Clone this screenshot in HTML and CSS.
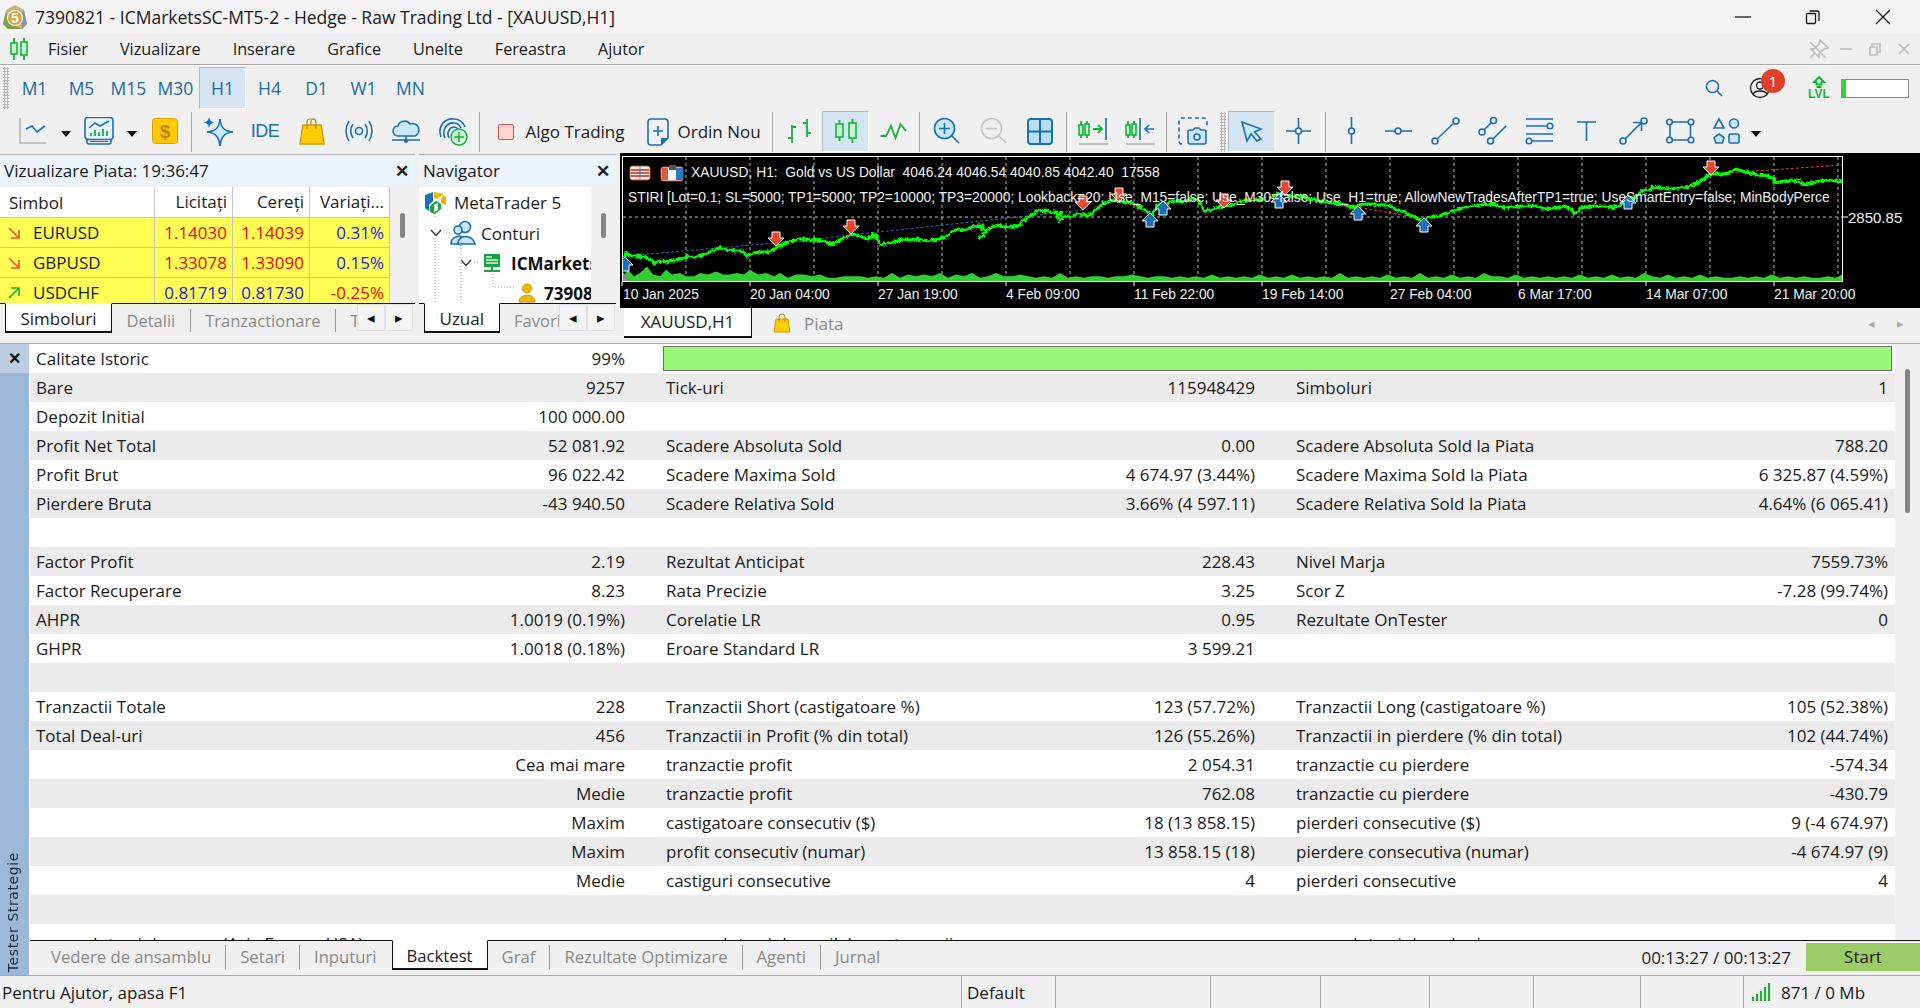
FILE: index.html
```html
<!DOCTYPE html>
<html lang="ro">

<head>
    <meta charset="UTF-8">
    <title>7390821 - ICMarketsSC-MT5-2</title>
    <link rel="stylesheet" href="styles.css">
</head>

<body>
    <!-- bara de titlu -->
    <div class="titlebar">
        <svg class="logo" width="26" height="26" viewBox="0 0 26 26">
            <path d="M13 1 L22 6 L25 20 L20 25 H6 L1 20 L4 6Z" fill="#c9b27a"/>
            <path d="M1 20 L4 8 L9 20 L20 25 H6Z" fill="#7fa04f"/>
            <path d="M22 6 L25 20 L20 25 L18 10Z" fill="#8a94a4"/>
            <circle cx="13" cy="14" r="8" fill="#fff"/>
            <circle cx="13" cy="14" r="7" fill="#d9a63a"/>
            <text x="13" y="19" class="logo-5">5</text>
        </svg>
        <span class="title-text">7390821 - ICMarketsSC-MT5-2 - Hedge - Raw Trading Ltd - [XAUUSD,H1]</span>
        <div class="winbtns">
            <svg width="16" height="16" viewBox="0 0 16 16"><path d="M0 8H16" class="blk"/></svg>
            <svg width="16" height="16" viewBox="0 0 16 16"><path d="M1.500 5.500a1 1 0 0 1 1-1h7a1 1 0 0 1 1 1v8a1 1 0 0 1-1 1h-7a1 1 0 0 1-1-1zM4.500 2h7.500a2 2 0 0 1 2 2v8" class="blk"/></svg>
            <svg width="16" height="16" viewBox="0 0 16 16"><path d="M1 1L15 15M15 1L1 15" class="blk"/></svg>
        </div>
    </div>

    <!-- meniu -->
    <div class="menubar">
        <svg class="menu-icon" width="20" height="22" viewBox="0 0 20 22">
            <path d="M5 0V22M15 0V22" class="gr"/>
            <rect x="2" y="5" width="6" height="11" class="gr-box"/>
            <rect x="12" y="4" width="6" height="13" class="gr-box"/>
        </svg>
        <div class="menu">
            <span>Fisier</span><span>Vizualizare</span><span>Inserare</span><span>Grafice</span><span>Unelte</span><span>Fereastra</span><span>Ajutor</span>
        </div>
        <div class="mdi">
            <svg class="mdi-pin" width="20" height="20" viewBox="0 0 20 20"><path d="M11 1L19 9L15 10L10 15L10 18L2 10L5 10L10 5ZM6 14L1 19M1 3L17 19" class="mdi-ic"/></svg>
            <svg width="12" height="12" viewBox="0 0 12 12"><path d="M0 6H12" class="mdi-ic"/></svg>
            <svg width="12" height="14" viewBox="0 0 12 14"><path d="M1 5h7v8H1zM3 5V2h8v8H8" class="mdi-ic"/></svg>
            <svg width="12" height="12" viewBox="0 0 12 12"><path d="M1 1L11 11M11 1L1 11" class="mdi-ic"/></svg>
        </div>
    </div>

    <!-- perioade -->
    <div class="tfbar">
        <div class="grip"></div>
        <div class="tfs">
            <span>M1</span><span>M5</span><span>M15</span><span>M30</span><span class="on">H1</span><span>H4</span><span>D1</span><span>W1</span><span>MN</span>
        </div>
        <div class="tf-right">
            <svg class="tf-search" width="18" height="18" viewBox="0 0 18 18"><circle cx="7.500" cy="7.500" r="6" class="ln"/><path d="M12 12L17 17" class="ln"/></svg>
            <div class="acct">
                <svg width="22" height="22" viewBox="0 0 22 22"><circle cx="11" cy="11" r="9.500" class="blk"/><circle cx="11" cy="8.500" r="3.500" class="blk"/><path d="M4 17c2-4 12-4 14 0" class="blk"/></svg>
                <span class="badge">1</span>
            </div>
            <div class="lvl">
                <svg width="14" height="12" viewBox="0 0 14 12"><path d="M7 1L12 6H9.500V8.500H4.500V6H2ZM4.500 11H9.500" class="gr"/></svg>
                <span>LVL</span>
            </div>
            <div class="lvlbar"><i></i></div>
        </div>
    </div>

    <!-- bara de unelte -->
    <div class="toolbar">
        <div class="tb">
            <svg class="i" viewBox="0 0 30 30"><path d="M2 1V26H28" class="gy"/><path d="M8 12L14 9L19 15L27 9" class="ln"/></svg>
        </div>
        <div class="drop"><i></i></div>
        <div class="tb">
            <svg class="i" viewBox="0 0 30 30"><rect x="1" y="0.500" width="28" height="22" rx="3" class="ln"/><rect x="3.500" y="3" width="23" height="17" fill="#e4f3fd"/><path d="M5 11L11 6L16 9L25 4" class="ln"/><path d="M7 19V16M11 19V13M15 19V15M19 19V12M23 19V14" class="gr"/><path d="M3 23V25a2 2 0 0 0 2 2H25a2 2 0 0 0 2-2V23" class="ln"/><path d="M6 24.500H24" class="ln-thin"/></svg>
        </div>
        <div class="drop"><i></i></div>
        <div class="tb">
            <svg class="i" viewBox="0 0 30 30"><rect x="2.500" y="1.500" width="25" height="25" rx="3" fill="#ffc800" stroke="#d9a400"/><text x="15" y="21" class="dollar">$</text></svg>
        </div>
        <div class="sep"></div>
        <div class="tb">
            <svg class="i" viewBox="0 0 30 30"><path d="M17 2C18 11 21 14 30 15C21 16 18 20 17 29C16 20 13 16 4 15C13 14 16 11 17 2Z" class="ln-fill"/><path d="M6 0C6.500 3 8 5 11 5.500C8 6 6.500 8 6 11C5.500 8 4 6 1 5.500C4 5 5.500 3 6 0Z" fill="#1a6fb5"/></svg>
        </div>
        <div class="tb"><span class="ide">IDE</span></div>
        <div class="tb">
            <svg class="i" viewBox="0 0 30 30"><path d="M6 8H24L27 27H3Z" fill="#ffcc00" stroke="#cf9e10" stroke-width="1.500"/><path d="M10 12V5a3 3 0 0 1 3-3h3a3 3 0 0 1 3 3v7M14 8V5a3 3 0 0 1 3-3" fill="none" stroke="#b58a10" stroke-width="1.200"/></svg>
        </div>
        <div class="tb">
            <svg class="i" viewBox="0 0 30 30"><circle cx="15" cy="14" r="3.500" class="ln"/><path d="M9 7C6 11 6 17 9 21M21 7C24 11 24 17 21 21M5 4C1 10 1 18 5 24M25 4C29 10 29 18 25 24" class="ln"/></svg>
        </div>
        <div class="tb">
            <svg class="i" viewBox="0 0 30 30"><path d="M7 19a5 5 0 0 1 0-10c1-5 9-7 12-2a6 6 0 0 1 5 12Z" class="ln-fill"/><path d="M1 23H29M15 19V23" class="ln"/><circle cx="15" cy="24" r="2" fill="#1a6fb5"/></svg>
        </div>
        <div class="tb">
            <svg class="i" viewBox="0 0 30 30"><path d="M3 20C-1 8 8 1 16 2C21 2 25 5 27 10M7 21C3 12 10 5 16 6C20 6 22 9 23 11M11 21C8 15 12 10 16 10C18 10 19 11 20 12" class="ln"/><circle cx="21" cy="20" r="8" fill="#d5f7dc" stroke="#12b53a" stroke-width="1.500"/><path d="M21 15V25M16 20H26" stroke="#12b53a" stroke-width="1.500"/></svg>
        </div>
        <div class="sep"></div>
        <div class="algo">
            <span class="algo-box"></span><span class="algo-txt">Algo Trading</span>
        </div>
        <div class="ordin">
            <svg width="22" height="28" viewBox="0 0 22 28"><path d="M4 1H18a3 3 0 0 1 3 3V20L14 27H4a3 3 0 0 1-3-3V4a3 3 0 0 1 3-3Z" class="ln"/><path d="M21 20H14V27Z" fill="#1a6fb5"/><path d="M11 8V18M6 13H16" class="ln"/></svg>
            <span>Ordin Nou</span>
        </div>
        <div class="sep"></div>
        <div class="tb">
            <svg class="i" viewBox="0 0 30 30"><path d="M8 8V26M8 10H12M4 21H8M23 2V20M19 6H23M23 16H27" class="gr"/></svg>
        </div>
        <div class="tb on">
            <svg class="i" viewBox="0 0 30 30"><path d="M8.500 3V24M21.500 2V26" class="gr"/><rect x="5" y="7" width="7" height="13" class="gr-box"/><rect x="18" y="6" width="7" height="15" class="gr-box"/></svg>
        </div>
        <div class="tb">
            <svg class="i" viewBox="0 0 30 30"><path d="M2.500 19L8 19L13 9L17.500 21L22.500 7L28 14" class="gr"/></svg>
        </div>
        <div class="sep"></div>
        <div class="tb">
            <svg class="i" viewBox="0 0 30 30"><circle cx="13.500" cy="11.500" r="10" class="ln-fill"/><path d="M21 19L28 26M13.500 6V17M8 11.500H19" class="ln"/></svg>
        </div>
        <div class="tb">
            <svg class="i" viewBox="0 0 30 30"><circle cx="13.500" cy="11.500" r="10" class="off"/><path d="M21 19L28 26M8 11.500H19" class="off"/></svg>
        </div>
        <div class="tb">
            <svg class="i" viewBox="0 0 30 30"><rect x="3" y="2" width="24" height="25" rx="3" fill="#b8e0fb" stroke="#1a6fb5" stroke-width="2"/><path d="M15 2V27M3 14.500H27" stroke="#1a6fb5" stroke-width="2"/></svg>
        </div>
        <div class="sep"></div>
        <div class="tb">
            <svg class="i" viewBox="0 0 30 30"><path d="M3 4V21M9 4V21" class="gr"/><rect x="1" y="8" width="4" height="10" class="gr-box"/><rect x="7" y="7" width="4" height="11" class="gr-box"/><path d="M15 12H24M20 8L24 12L20 16" class="gr"/><path d="M28 1V23" class="ln"/><path d="M1 27H30" class="gy"/></svg>
        </div>
        <div class="tb">
            <svg class="i" viewBox="0 0 30 30"><path d="M3 4V21M9 4V21" class="gr"/><rect x="1" y="8" width="4" height="10" class="gr-box"/><rect x="7" y="7" width="4" height="11" class="gr-box"/><path d="M15 1V23M20 12H29M24 8L20 12L24 16" class="ln"/><path d="M1 27H30" class="gy"/></svg>
        </div>
        <div class="sep"></div>
        <div class="tb">
            <svg class="i" viewBox="0 0 30 30"><path d="M4 27a3 3 0 0 1-3-3V4a3 3 0 0 1 3-3H26a3 3 0 0 1 3 3V9" class="ln dash"/><path d="M10 15a2 2 0 0 1 2-2H15L17 11H21L23 13H26a2 2 0 0 1 2 2V25a2 2 0 0 1-2 2H12a2 2 0 0 1-2-2Z" class="ln-fill"/><circle cx="19" cy="20" r="3" class="ln"/></svg>
        </div>
        <div class="grip grip-tb"></div>
        <div class="tb on">
            <svg class="i" viewBox="0 0 30 30"><path d="M5 5L24 12L17.500 15L24 22L20 24L14 17L10 24Z" class="ln-fill"/></svg>
        </div>
        <div class="tb">
            <svg class="i" viewBox="0 0 30 30"><circle cx="14.500" cy="14" r="3" class="ln"/><path d="M14.500 1V11M14.500 17V27M2 14H11.500M17.500 14H27" class="ln"/></svg>
        </div>
        <div class="sep"></div>
        <div class="tb">
            <svg class="i" viewBox="0 0 30 30"><circle cx="14.500" cy="14" r="3" class="ln"/><path d="M14.500 0V11M14.500 17V27" class="ln"/></svg>
        </div>
        <div class="tb">
            <svg class="i" viewBox="0 0 30 30"><circle cx="14" cy="14" r="3" class="ln"/><path d="M1 14H11M17 14H28" class="ln"/></svg>
        </div>
        <div class="tb">
            <svg class="i" viewBox="0 0 30 30"><circle cx="4" cy="24" r="3" class="ln"/><circle cx="25" cy="4" r="3" class="ln"/><path d="M6 22L23 6" class="ln"/></svg>
        </div>
        <div class="tb">
            <svg class="i" viewBox="0 0 30 30"><circle cx="4" cy="15" r="3" class="ln"/><circle cx="15.500" cy="3.500" r="3" class="ln"/><circle cx="12.500" cy="24" r="3" class="ln"/><path d="M6 13L13.500 5.500M15 22L28 9" class="ln"/></svg>
        </div>
        <div class="tb">
            <svg class="i" viewBox="0 0 30 30"><circle cx="25" cy="9" r="2.800" class="ln"/><circle cx="4" cy="24" r="2.800" class="ln"/><path d="M1 2H28M1 9H22M1 17H28M7 24H28" class="ln"/></svg>
        </div>
        <div class="tb">
            <svg class="i" viewBox="0 0 30 30"><path d="M5 5H24M14.500 5V24" class="ln"/></svg>
        </div>
        <div class="tb">
            <svg class="i" viewBox="0 0 30 30"><circle cx="4" cy="24" r="3" class="ln"/><circle cx="25" cy="4" r="3" class="ln"/><path d="M6 22L22 6M14 5.500H22.500V14" class="ln"/></svg>
        </div>
        <div class="tb">
            <svg class="i" viewBox="0 0 30 30"><path d="M6 5H22M6 23H22M4 7.500V20.500M24.500 7.500V20.500" class="ln"/><circle cx="3.500" cy="5" r="2.800" class="ln"/><circle cx="25" cy="5" r="2.800" class="ln"/><circle cx="3.500" cy="23" r="2.800" class="ln"/><circle cx="25" cy="23" r="2.800" class="ln"/></svg>
        </div>
        <div class="tb">
            <svg class="i" viewBox="0 0 30 30"><path d="M6 2L11 11H1Z" class="ln"/><circle cx="21" cy="6.500" r="4.500" class="ln-fill"/><path d="M6 17L11 20.500L9.500 26H3L1 20.500Z" class="ln-fill"/><rect x="16" y="17" width="10" height="9" rx="1.500" class="ln-fill"/></svg>
        </div>
        <div class="drop drop-end"><i></i></div>
    </div>

    <!-- panouri -->
    <div class="panes">
        <div class="pane pane-market">
            <div class="pane-head"><span>Vizualizare Piata: 19:36:47</span><b class="x">&#x2715;</b></div>
            <div class="pane-body">
                <div class="mw">
                    <div class="mw-row mw-head"><span>Simbol</span><span>Licitați</span><span>Cereți</span><span>Variați...</span></div>
                    <div class="mw-row mw-y">
                        <span><svg class="ar" viewBox="0 0 12 12"><path d="M1 1L11 11M3 11H11V3" class="ar-r"/></svg>EURUSD</span><span class="red">1.14030</span><span class="red">1.14039</span><span class="blue">0.31%</span>
                    </div>
                    <div class="mw-row mw-y">
                        <span><svg class="ar" viewBox="0 0 12 12"><path d="M1 1L11 11M3 11H11V3" class="ar-r"/></svg>GBPUSD</span><span class="red">1.33078</span><span class="red">1.33090</span><span class="blue">0.15%</span>
                    </div>
                    <div class="mw-row mw-y mw-cut">
                        <span><svg class="ar" viewBox="0 0 12 12"><path d="M1 11L11 1M3 1H11V9" class="ar-g"/></svg>USDCHF</span><span class="blue">0.81719</span><span class="blue">0.81730</span><span class="red">-0.25%</span>
                    </div>
                </div>
                <div class="vscroll"><i></i></div>
            </div>
            <div class="tabs">
                <span class="tab on">Simboluri</span><span class="tab">Detalii</span><span class="tab">Tranzactionare</span><span class="tab tab-cut">T</span>
                <div class="arrows"><span>&#9666;</span><span>&#9656;</span></div>
            </div>
        </div>

        <div class="pane pane-nav">
            <div class="pane-head"><span>Navigator</span><b class="x">&#x2715;</b></div>
            <div class="pane-body">
                <div class="tree">
                    <div class="node n0">
                        <svg width="23" height="24" viewBox="0 0 23 24"><path d="M1 4L9 1V10L5 14V20L1 17Z" fill="#1a6fb5"/><path d="M10 1L20 3L13 8L10 7Z" fill="#f2b700"/><path d="M20 4L22 6V14L17 12V8Z" fill="#f2b700"/><path d="M6 15L12 10L17 13V18L11 23L6 21Z" fill="#18a63c"/><path d="M10 14L14 12V19L10 21Z" fill="#fff"/></svg>
                        <span>MetaTrader 5</span>
                    </div>
                    <div class="node n1">
                        <svg class="chev" viewBox="0 0 12 8"><path d="M1 1L6 6.500L11 1" class="chev-p"/></svg>
                        <svg class="nic" width="26" height="26" viewBox="0 0 26 26"><circle cx="15" cy="7" r="5.500" class="ln-fill"/><path d="M7 24C7 14 23 14 25 24Z" class="ln-fill"/><circle cx="8" cy="10" r="4" class="ln-fill"/><path d="M1 24C1 17 9 15 12 17C9 19 8 21 8 24Z" class="ln-fill"/></svg>
                        <span>Conturi</span>
                    </div>
                    <div class="node n2">
                        <svg class="chev" viewBox="0 0 12 8"><path d="M1 1L6 6.500L11 1" class="chev-p"/></svg>
                        <svg class="nic" width="20" height="20" viewBox="0 0 20 20"><rect x="2" y="1" width="16" height="13" fill="#17a53b"/><path d="M4 4H10M4 7H16M4 10H16" stroke="#dff5e3" stroke-width="1.500"/><path d="M10 14V17M2 18H18" stroke="#17a53b" stroke-width="2"/></svg>
                        <b>ICMarketsSC-MT5-2</b>
                    </div>
                    <div class="node n3">
                        <svg class="nic" width="18" height="20" viewBox="0 0 18 20"><circle cx="9" cy="5.500" r="4.500" fill="#f2b700" stroke="#c99700"/><path d="M1 19C1 10 17 10 17 19Z" fill="#f2b700" stroke="#c99700"/></svg>
                        <b>7390821</b>
                    </div>
                    <svg class="tree-dots" width="172" height="117" viewBox="0 0 172 117">
                        <path d="M16 26V30M16 42V116M42 55V60M42 58V116M74 84V100H96" class="dots"/>
                        <path d="M27 46H33M55 75H61" class="dots"/>
                    </svg>
                </div>
                <div class="vscroll"><i></i></div>
            </div>
            <div class="tabs">
                <span class="tab on">Uzual</span><span class="tab tab-cut">Favori</span>
                <div class="arrows arrows-nav"><span>&#9666;</span><span>&#9656;</span></div>
            </div>
        </div>

        <div class="pane-chart">
            <div class="chart">
                <svg width="1300" height="155" viewBox="0 -1 1300 155">
                    <defs>
                        <clipPath id="plot"><rect x="3" y="3" width="1219" height="124"/></clipPath>
                        <path id="dn" d="M-4-7H4V-1H8L0 7L-8-1H-4Z"/>
                        <path id="up" d="M-4 7H4V1H8L0-7L-8 1H-4Z"/>
                        <filter id="rough" x="-2%" y="-20%" width="104%" height="140%" color-interpolation-filters="sRGB">
                            <feTurbulence type="fractalNoise" baseFrequency="0.3" numOctaves="2" seed="4" result="n"/>
                            <feDisplacementMap in="SourceGraphic" in2="n" scale="5" xChannelSelector="R" yChannelSelector="G"/>
                        </filter>
                    </defs>
                    <!-- grila -->
                    <path class="grid" d="M66 3V127M130 3V127M194 3V127M258 3V127M322 3V127M386 3V127M450 3V127M514 3V127M578 3V127M642 3V127M706 3V127M770 3V127M834 3V127M898 3V127M962 3V127M1026 3V127M1090 3V127M1154 3V127M1218 3V127M3 63H1222"/>
                    <!-- volum -->
                    <path class="vol" transform="translate(0 127) scale(1 1.600) translate(0 -127)" d="M3 127V124L8 120L14 124L20 122L27 118L33 123L40 124L46 120L52 123L60 122L66 124L74 124L80 122L88 123L96 121L103 123L110 123L117 122L124 123L130 120L138 123L146 122L154 124L160 122L168 125L176 123L184 123L192 124L200 123L208 125L216 125L224 124L232 124L240 124L248 125L256 124L264 125L272 122L280 125L288 123L296 124L304 123L312 124L320 122L328 125L336 123L344 124L352 122L360 125L368 124L376 122L384 124L392 124L400 123L408 124L416 125L424 124L432 125L440 122L448 125L456 124L464 125L472 124L480 124L488 125L496 124L504 124L512 123L520 124L528 125L536 124L544 124L552 125L560 124L568 125L576 124L584 125L592 123L600 125L608 124L616 125L624 124L632 125L640 123L648 125L656 124L664 125L672 123L680 125L688 124L696 125L704 124L712 125L720 122L728 125L736 124L744 125L752 124L760 125L768 123L776 125L784 124L792 125L800 122L808 125L816 124L824 125L832 123L840 125L848 124L856 125L864 122L872 124L880 124L888 125L896 123L904 125L912 124L920 125L928 124L936 125L944 124L952 125L960 123L968 125L976 124L984 125L992 123L1000 125L1008 124L1016 125L1024 122L1032 124L1040 125L1048 123L1056 125L1064 124L1072 125L1080 123L1088 125L1096 124L1104 125L1112 125L1120 124L1128 125L1136 124L1144 125L1152 123L1160 125L1168 124L1176 125L1184 124L1192 125L1200 125L1208 124L1216 125L1222 123V127Z"/>
                    <path class="vol-gy" d="M3 127V118L9 127Z"/>
                    <g clip-path="url(#plot)">
                        <!-- linii tranzactii -->
                        <path class="tr-blue" d="M6 102L156 89M156 90L231 81M231 81L463 56"/>
                        <path class="tr-red" d="M499 46L530 58M604 48L665 41M665 43L738 53L804 65M1091 20L1222 11"/>
                        <!-- pret -->
                        <g filter="url(#rough)">
                            <polyline class="price" points="4,104 6,100 10,101 14,102 18,102 22,103 26,103 30,106 34,109 38,108 42,107 46,108 50,107 54,107 58,105 62,105 66,103 70,102 74,104 78,102 84,100 90,98 96,95 100,94 104,95 110,96 116,97 122,97 127,102 130,101 134,99 140,98 146,98 150,98 154,95 158,92 162,92 166,88 172,87 178,85 184,85 190,86 196,86 202,87 208,89 212,90 218,87 224,84 231,80 236,81 242,83 248,85 250,83 252,83 254,80 258,85 260,91 264,90 268,89 274,88 280,86 284,85 290,86 296,85 302,86 308,87 314,86 320,85 326,82 332,78 338,75 344,76 350,74 354,72 358,73 364,71 360,71 362,74 366,78 360,84 359,85 362,81 368,76 372,73 378,71 384,73 390,72 396,73 400,70 404,66 410,62 414,60 418,56 424,57 430,58 436,58 442,60 436,60 440,67 444,62 450,63 456,60 462,60 466,62 472,60 476,55 482,51 488,48 494,46 500,47 506,49 512,49 520,53 530,60 532,63 534,58 538,50 544,50 550,48 556,47 562,48 568,47 572,45 578,45 582,53 585,57 590,56 596,54 604,52 612,51 620,47 628,47 636,46 644,45"/>
                            <polyline class="price" points="650,44 658,40 664,40 672,42 680,42 690,45 700,47 712,49 722,50 735,54 738,51 742,50 750,50 758,51 768,51 776,55 784,58 790,61 797,64 804,69 808,63 816,63 822,61 830,58 840,55 846,53 860,51 872,50 885,54 892,53 900,52 915,52 925,55 934,54 945,52 952,56 954,60 958,58 960,54 972,52 984,52 994,54 1000,51 1006,49 1012,46 1018,41 1022,37 1030,36 1032,33 1040,34 1050,35 1060,34 1070,32 1080,28 1090,20 1096,20 1105,20 1112,17 1116,15 1122,17 1130,19 1138,21 1148,22 1154,25 1154,29 1160,28 1170,26 1176,27 1180,28 1184,30 1190,29 1200,27 1210,26 1222,28"/>
                        </g>
                        <!-- marcaje -->
                        <use href="#dn" class="m-dn" x="156" y="85"/>
                        <use href="#dn" class="m-dn" x="231" y="73"/>
                        <use href="#dn" class="m-dn" x="463" y="49"/>
                        <use href="#dn" class="m-dn" x="499" y="41"/>
                        <use href="#dn" class="m-dn" x="604" y="47"/>
                        <use href="#dn" class="m-dn" x="665" y="34"/>
                        <use href="#dn" class="m-dn" x="1091" y="14"/>
                        <use href="#up" class="m-up" x="5" y="110"/>
                        <use href="#up" class="m-up" x="530" y="66"/>
                        <use href="#up" class="m-up" x="543" y="54"/>
                        <use href="#up" class="m-up" x="659" y="47"/>
                        <use href="#up" class="m-up" x="738" y="59"/>
                        <use href="#up" class="m-up" x="804" y="71"/>
                        <use href="#up" class="m-up" x="1008" y="48"/>
                        <text x="8" y="48" class="ct">STIRI [Lot=0.1; SL=5000; TP1=5000; TP2=10000; TP3=20000; Lookback=20; Use_M15=false; Use_M30=false; Use_H1=true; AllowNewTradesAfterTP1=true; UseSmartEntry=false; MinBodyPerce</text>
                    </g>
                    <rect class="box" x="2.500" y="2.500" width="1220" height="125"/>
                    <!-- butoane -->
                    <rect x="10" y="12" width="20" height="14" rx="2" fill="#f4f4f4" stroke="#c8402a"/>
                    <path d="M11 16H29M11 19H29M11 22H29" stroke="#d85a40" stroke-width="2"/>
                    <path d="M20 13V25" stroke="#2a7cc0" stroke-width="1"/>
                    <rect x="41" y="13" width="22" height="14" rx="2" fill="#fff" stroke="#c8402a"/>
                    <path d="M42 14H48V26H42Z" fill="#d85a40"/>
                    <path d="M49 11H56V16H49Z" fill="#555"/>
                    <path d="M56 14H63V26H56Z" fill="#2a7cc0"/>
                    <text x="71" y="23" class="ct">XAUUSD, H1:  Gold vs US Dollar  4046.24 4046.54 4040.85 4042.40  17558</text>
                    <!-- axe -->
                    <path class="box" d="M1223 63H1228M130 128V132M258 128V132M386 128V132M514 128V132M642 128V132M770 128V132M898 128V132M1026 128V132M1154 128V132M2 128V132"/>
                    <text x="1228" y="69" class="ct ct-price">2850.85</text>
                    <text x="3" y="145" class="ct">10 Jan 2025</text>
                    <text x="130" y="145" class="ct">20 Jan 04:00</text>
                    <text x="258" y="145" class="ct">27 Jan 19:00</text>
                    <text x="386" y="145" class="ct">4 Feb 09:00</text>
                    <text x="514" y="145" class="ct">11 Feb 22:00</text>
                    <text x="642" y="145" class="ct">19 Feb 14:00</text>
                    <text x="770" y="145" class="ct">27 Feb 04:00</text>
                    <text x="898" y="145" class="ct">6 Mar 17:00</text>
                    <text x="1026" y="145" class="ct">14 Mar 07:00</text>
                    <text x="1154" y="145" class="ct">21 Mar 20:00</text>
                </svg>
            </div>
            <div class="chart-tabs">
                <span class="ctab">XAUUSD,H1</span>
                <svg class="cbag" width="18" height="20" viewBox="0 0 18 20"><path d="M3 6H15L17 19H1Z" fill="#ffcc00" stroke="#cf9e10"/><path d="M6 9V4a3 3 0 0 1 6 0v5" fill="none" stroke="#b58a10"/></svg>
                <span class="piata">Piata</span>
                <span class="cnav"><i>&#9666;</i><i>&#9656;</i></span>
            </div>
        </div>
    </div>

    <!-- tester -->
    <div class="tester">
        <div class="side">
            <div class="side-x">&#x2715;</div>
            <div class="side-txt">Tester Strategie</div>
        </div>
        <div class="tester-main">
            <div class="report-wrap">
                <div class="report">
                    <div class="r"><div class="c"><span>Calitate Istoric</span><span>99%</span></div><div class="quality"></div></div>
                    <div class="r"><div class="c"><span>Bare</span><span>9257</span></div><div class="c"><span>Tick-uri</span><span>115948429</span></div><div class="c"><span>Simboluri</span><span>1</span></div></div>
                    <div class="r"><div class="c"><span>Depozit Initial</span><span>100 000.00</span></div></div>
                    <div class="r"><div class="c"><span>Profit Net Total</span><span>52 081.92</span></div><div class="c"><span>Scadere Absoluta Sold</span><span>0.00</span></div><div class="c"><span>Scadere Absoluta Sold la Piata</span><span>788.20</span></div></div>
                    <div class="r"><div class="c"><span>Profit Brut</span><span>96 022.42</span></div><div class="c"><span>Scadere Maxima Sold</span><span>4 674.97 (3.44%)</span></div><div class="c"><span>Scadere Maxima Sold la Piata</span><span>6 325.87 (4.59%)</span></div></div>
                    <div class="r"><div class="c"><span>Pierdere Bruta</span><span>-43 940.50</span></div><div class="c"><span>Scadere Relativa Sold</span><span>3.66% (4 597.11)</span></div><div class="c"><span>Scadere Relativa Sold la Piata</span><span>4.64% (6 065.41)</span></div></div>
                    <div class="r"></div>
                    <div class="r"><div class="c"><span>Factor Profit</span><span>2.19</span></div><div class="c"><span>Rezultat Anticipat</span><span>228.43</span></div><div class="c"><span>Nivel Marja</span><span>7559.73%</span></div></div>
                    <div class="r"><div class="c"><span>Factor Recuperare</span><span>8.23</span></div><div class="c"><span>Rata Precizie</span><span>3.25</span></div><div class="c"><span>Scor Z</span><span>-7.28 (99.74%)</span></div></div>
                    <div class="r"><div class="c"><span>AHPR</span><span>1.0019 (0.19%)</span></div><div class="c"><span>Corelatie LR</span><span>0.95</span></div><div class="c"><span>Rezultate OnTester</span><span>0</span></div></div>
                    <div class="r"><div class="c"><span>GHPR</span><span>1.0018 (0.18%)</span></div><div class="c"><span>Eroare Standard LR</span><span>3 599.21</span></div></div>
                    <div class="r"></div>
                    <div class="r"><div class="c"><span>Tranzactii Totale</span><span>228</span></div><div class="c"><span>Tranzactii Short (castigatoare %)</span><span>123 (57.72%)</span></div><div class="c"><span>Tranzactii Long (castigatoare %)</span><span>105 (52.38%)</span></div></div>
                    <div class="r"><div class="c"><span>Total Deal-uri</span><span>456</span></div><div class="c"><span>Tranzactii in Profit (% din total)</span><span>126 (55.26%)</span></div><div class="c"><span>Tranzactii in pierdere (% din total)</span><span>102 (44.74%)</span></div></div>
                    <div class="r"><div class="c"><span></span><span>Cea mai mare</span></div><div class="c"><span>tranzactie profit</span><span>2 054.31</span></div><div class="c"><span>tranzactie cu pierdere</span><span>-574.34</span></div></div>
                    <div class="r"><div class="c"><span></span><span>Medie</span></div><div class="c"><span>tranzactie profit</span><span>762.08</span></div><div class="c"><span>tranzactie cu pierdere</span><span>-430.79</span></div></div>
                    <div class="r"><div class="c"><span></span><span>Maxim</span></div><div class="c"><span>castigatoare consecutiv ($)</span><span>18 (13 858.15)</span></div><div class="c"><span>pierderi consecutive ($)</span><span>9 (-4 674.97)</span></div></div>
                    <div class="r"><div class="c"><span></span><span>Maxim</span></div><div class="c"><span>profit consecutiv (numar)</span><span>13 858.15 (18)</span></div><div class="c"><span>pierdere consecutiva (numar)</span><span>-4 674.97 (9)</span></div></div>
                    <div class="r"><div class="c"><span></span><span>Medie</span></div><div class="c"><span>castiguri consecutive</span><span>4</span></div><div class="c"><span>pierderi consecutive</span><span>4</span></div></div>
                    <div class="r"></div>
                    <div class="r sect"><b>Intrari dupa ore (Asia Europa USA)</b><b>Intrari dupa zilele saptamanii</b><b>Intrari dupa luni</b></div>
                </div>
                <div class="vscroll vscroll-r"><i></i></div>
            </div>
            <div class="tester-tabs">
                <span class="ttab">Vedere de ansamblu</span><span class="ttab">Setari</span><span class="ttab">Inputuri</span><span class="ttab on">Backtest</span><span class="ttab">Graf</span><span class="ttab">Rezultate Optimizare</span><span class="ttab">Agenti</span><span class="ttab">Jurnal</span>
                <span class="timer">00:13:27 / 00:13:27</span>
                <span class="start">Start</span>
            </div>
        </div>
    </div>

    <!-- status -->
    <div class="status">
        <span class="st st-main">Pentru Ajutor, apasa F1</span>
        <span class="st st1">Default</span>
        <span class="st st2"></span><span class="st st3"></span><span class="st st4"></span><span class="st st5"></span><span class="st st6"></span><span class="st st7"></span>
        <span class="st st-net">
            <svg width="22" height="18" viewBox="0 0 22 18"><path d="M2 18V14M6 18V11M10 18V8M14 18V4M18 18V0" stroke="#2aa83a" stroke-width="2.200"/></svg>
            871 / 0 Mb
        </span>
    </div>
</body>

</html>
```

FILE: styles.css
```css
* {
    margin: 0;
    padding: 0;
    box-sizing: border-box;
}

html,
body {
    height: 1008px;
    overflow: hidden;
}

body {
    font-family: "Open Sans", "Noto Sans", sans-serif;
    font-size: 17px;
    color: #1a1a1a;
    background: #f0f0f0;
    display: flex;
    flex-direction: column;
}

svg {
    display: block;
    flex: none;
}

/* culori comune pentru iconite */
.ln {
    fill: none;
    stroke: #1a6fb5;
    stroke-width: 1.6;
}

.ln-thin {
    fill: none;
    stroke: #1a6fb5;
    stroke-width: 1;
}

.ln-fill {
    fill: #cbe7fb;
    stroke: #1a6fb5;
    stroke-width: 1.6;
}

.dash {
    stroke-dasharray: 4 3;
}

.gr {
    fill: none;
    stroke: #12b53a;
    stroke-width: 1.8;
}

.gr-box {
    fill: #c9f7d2;
    stroke: #12b53a;
    stroke-width: 1.6;
}

.gy {
    fill: none;
    stroke: #b4b4b4;
    stroke-width: 1.6;
}

.off {
    fill: #eeeeee;
    stroke: #c4c4c4;
    stroke-width: 1.6;
}

.blk {
    fill: none;
    stroke: #1a1a1a;
    stroke-width: 1.300;
}

/* titlu */
.titlebar {
    height: 33px;
    background: #f3f3f3;
    display: flex;
    align-items: center;
    padding-left: 2px;
    flex: none;
}

.logo-5 {
    font: bold 14px "Liberation Sans", sans-serif;
    fill: #fff;
    text-anchor: middle;
}

.title-text {
    margin-left: 7px;
    font-size: 17.500px;
    white-space: nowrap;
}

.winbtns {
    margin-left: auto;
    display: flex;
    gap: 54px;
    padding-right: 29px;
}

/* meniu */
.menubar {
    height: 32px;
    display: flex;
    align-items: center;
    border-bottom: 1px solid #a8a8a8;
    padding-left: 9px;
    flex: none;
}

.menu {
    display: flex;
    gap: 32px;
    margin-left: 19px;
    font-size: 16.200px;
}

.mdi {
    margin-left: auto;
    display: flex;
    align-items: center;
    gap: 17px;
    padding-right: 10px;
}

.mdi-pin {
    margin-right: -6px;
}

.mdi-ic {
    fill: none;
    stroke: #bcbcbc;
    stroke-width: 1.6;
}

/* perioade */
.tfbar {
    height: 45px;
    display: flex;
    align-items: center;
    border-top: 1px solid #fff;
    padding-left: 3px;
    flex: none;
}

.grip {
    width: 6px;
    height: 42px;
    background-image: radial-gradient(#b8b8b8 1px, transparent 1.200px);
    background-size: 3px 3px;
}

.tfs {
    display: flex;
    margin-left: 2px;
}

.tfs span {
    width: 47px;
    height: 42px;
    display: flex;
    align-items: center;
    justify-content: center;
    color: #1a6aa8;
    font-size: 17.500px;
}

.tfs .on {
    background: #d5e4f2;
    border: 1px solid #b0b8c4;
    border-right-color: #fff;
    border-bottom-color: #fff;
}

.tf-right {
    margin-left: auto;
    display: flex;
    align-items: center;
    padding-right: 11px;
}

.tf-search {
    margin-right: 26px;
}

.acct {
    position: relative;
    width: 22px;
    margin-right: 37px;
}

.badge {
    position: absolute;
    left: 12px;
    top: -8px;
    width: 24px;
    height: 24px;
    border-radius: 50%;
    background: #e0402a;
    color: #fff;
    font-size: 15px;
    line-height: 24px;
    text-align: center;
}

.lvl {
    width: 22px;
    margin-right: 11px;
    display: flex;
    flex-direction: column;
    align-items: center;
    color: #12b53a;
    font: bold 12px/12px "Liberation Sans Narrow", "Liberation Sans", sans-serif;
}

.lvlbar {
    width: 68px;
    height: 19px;
    background: #fff;
    border: 1px solid #8c8c8c;
}

.lvlbar i {
    display: block;
    width: 4px;
    height: 100%;
    background: #38d23c;
}

/* bara de unelte */
.toolbar {
    height: 43px;
    display: flex;
    align-items: center;
    padding-left: 9.500px;
    flex: none;
}

.tb {
    width: 47px;
    height: 41px;
    display: flex;
    align-items: center;
    justify-content: center;
    flex: none;
}

.tb.on {
    background: #d5e4f2;
    border: 1px solid #b0b8c4;
    border-right-color: #fff;
    border-bottom-color: #fff;
}

.i {
    width: 30px;
    height: 30px;
}

.drop {
    width: 19px;
    height: 40px;
    display: flex;
    align-items: center;
    justify-content: center;
    flex: none;
    padding-top: 4px;
}

.drop i {
    border-left: 5.500px solid transparent;
    border-right: 5.500px solid transparent;
    border-top: 6px solid #111;
}

.drop-end {
    margin-left: -2px;
    width: 14px;
}

.dollar {
    font: bold 19px "Liberation Sans", sans-serif;
    fill: #b88a10;
    text-anchor: middle;
}

.ide {
    color: #1a6fb5;
    font: 18px "Liberation Sans", sans-serif;
    letter-spacing: -0.5px;
}

.sep {
    width: 1px;
    height: 40px;
    background: #a4a4a4;
    margin: 0 2.500px;
    flex: none;
}

.algo {
    width: 157px;
    display: flex;
    align-items: center;
    padding-left: 15px;
    flex: none;
}

.algo-box {
    width: 16px;
    height: 16px;
    background: #ffd6d0;
    border: 1.500px solid #e05050;
    border-radius: 2px;
    flex: none;
}

.algo-txt {
    margin-left: 12px;
    white-space: nowrap;
}

.ordin {
    width: 129.500px;
    display: flex;
    align-items: center;
    gap: 9px;
    padding-left: 7px;
    flex: none;
    white-space: nowrap;
}

.grip-tb {
    width: 6px;
    height: 40px;
    margin: 0 2px 0 4px;
    flex: none;
}

/* panouri */
.panes {
    height: 190px;
    display: flex;
    flex: none;
}

.pane {
    display: flex;
    flex-direction: column;
    border-top: 1px solid #b4b4b4;
    margin-top: 1px;
}

.pane-market {
    width: 415px;
}

.pane-nav {
    width: 197px;
    margin-left: 4px;
}

.pane-head {
    height: 30px;
    background: #ebf4fb;
    display: flex;
    align-items: center;
    justify-content: space-between;
    padding: 0 6px 0 4px;
    flex: none;
    white-space: nowrap;
}

.x {
    font-size: 17px;
    color: #222;
}

.pane-body {
    display: flex;
    height: 117px;
    margin-top: 2px;
    overflow: hidden;
    flex: none;
}

.mw {
    width: 390px;
    background: #fff;
}

.mw-row {
    display: grid;
    grid-template-columns: 155px 78px 77px 80px;
    height: 30px;
    line-height: 29px;
}

.mw-row span {
    text-align: right;
    padding-right: 5px;
    border-right: 1px solid #c4c4c4;
    white-space: nowrap;
}

.mw-row span:first-child {
    text-align: left;
    padding-left: 9px;
    display: flex;
    align-items: center;
}

.mw-head {
    height: 31px;
    border-bottom: 1px solid #c4c4c4;
}

.mw-y {
    background: #ffff54;
    border-bottom: 1px solid #c8c8a0;
}

.mw-y span:first-child {
    padding-left: 8px;
}

.mw-cut {
    height: 26px;
    border: 0;
}

.ar {
    width: 12px;
    height: 12px;
    margin-right: 13px;
}

.ar-r {
    fill: none;
    stroke: #f05030;
    stroke-width: 1.600;
}

.ar-g {
    fill: none;
    stroke: #12b53a;
    stroke-width: 1.600;
}

.red {
    color: #f00;
}

.blue {
    color: #1a1ae0;
}

.vscroll {
    flex: 1;
    position: relative;
    background: #f0f0f0;
}

.vscroll i {
    position: absolute;
    left: 10px;
    top: 26px;
    width: 5px;
    height: 25px;
    border-radius: 3px;
    background: #858585;
}

.tabs {
    height: 39px;
    border-top: 1px solid #111;
    display: flex;
    align-items: flex-start;
    position: relative;
    padding-left: 5px;
    margin-top: -1px;
    font-size: 16.500px;
}

.tab {
    padding: 0 14.500px;
    height: 23px;
    margin-top: 5px;
    line-height: 23px;
    color: #8a8a8a;
    border-right: 1px solid #9a9a9a;
    white-space: nowrap;
}

.tab.on {
    margin-top: -1px;
    height: 30px;
    line-height: 30px;
    background: #fff;
    color: #1a1a1a;
    border: 1px solid #111;
    border-top: 1px solid #fff;
    border-bottom-width: 2px;
    font-size: 17px;
}

.tab-cut {
    border: 0;
}

.arrows {
    position: absolute;
    right: 2px;
    top: 0;
    display: flex;
    background: #f0f0f0;
}

.arrows-nav {
    right: 1px;
}

.arrows span {
    width: 28px;
    height: 27px;
    border: 1px solid #e2e2e2;
    background: #f4f4f4;
    text-align: center;
    line-height: 25px;
    font-size: 15px;
    color: #111;
}

.tree {
    width: 172px;
    background: #fff;
    overflow: hidden;
    position: relative;
}

.node {
    height: 30px;
    display: flex;
    align-items: center;
    white-space: nowrap;
}

.n0 {
    padding-left: 5px;
    gap: 7px;
    height: 31px;
}

.n1 {
    padding-left: 11px;
}

.n1 .nic {
    margin: 0 5px 0 8px;
}

.n2 {
    padding-left: 41px;
}

.n2 .nic {
    margin: 0 9px 0 10px;
}

.n3 {
    padding-left: 99px;
}

.n3 .nic {
    margin-right: 8px;
}

.node b {
    color: #111;
}

.chev {
    width: 12px;
    height: 8px;
}

.chev-p {
    fill: none;
    stroke: #333;
    stroke-width: 1.300;
}

.tree-dots {
    position: absolute;
    left: 0;
    top: 0;
}

.dots {
    fill: none;
    stroke: #9a9a9a;
    stroke-dasharray: 1 2;
}

/* grafic */
.pane-chart {
    width: 1300px;
    display: flex;
    flex-direction: column;
    margin-left: 4px;
}

.chart {
    height: 155px;
    background: #000;
    flex: none;
}

.grid {
    fill: none;
    stroke: #b8b8b8;
    stroke-dasharray: 3 3;
}

.vol {
    fill: #32cd32;
}

.vol-gy {
    fill: #8a8a8a;
}

.tr-blue {
    fill: none;
    stroke: #1a6fb5;
    stroke-dasharray: 3 2;
}

.tr-red {
    fill: none;
    stroke: #e0452a;
    stroke-dasharray: 3 2;
}

.price {
    fill: none;
    stroke: #00ff00;
    stroke-width: 3;
}

.m-dn {
    fill: #e8452c;
    stroke: #fff;
    stroke-width: 1;
}

.m-up {
    fill: #1a6fb5;
    stroke: #fff;
    stroke-width: 1;
}

.box {
    fill: none;
    stroke: #fff;
}

.ct {
    font: 13.800px "Liberation Sans", sans-serif;
    fill: #f0f0f0;
    white-space: pre;
}

.ct-price {
    font-size: 15px;
}

.chart-tabs {
    height: 35px;
    display: flex;
    align-items: flex-start;
    padding-left: 4px;
}

.ctab {
    width: 128px;
    height: 29px;
    line-height: 28px;
    text-align: center;
    background: #fff;
    border-right: 1px solid #111;
    border-bottom: 1px solid #111;
    box-shadow: 0 1px 0 #111;
}

.cbag {
    margin: 5px 0 0 21px;
}

.piata {
    margin: 4px 0 0 13px;
    color: #8a8a8a;
}

.cnav {
    margin: 6px 16px 0 auto;
    display: flex;
    gap: 22px;
}

.cnav i {
    font-style: normal;
    font-size: 13px;
    color: #aaa;
}

/* tester */
.tester {
    height: 632px;
    display: flex;
    border-top: 1px solid #a8a8a8;
    flex: none;
}

.side {
    width: 30px;
    background: #9db7d6;
    border-right: 1px solid #fff;
    display: flex;
    flex-direction: column;
    justify-content: space-between;
    flex: none;
}

.side-x {
    height: 29px;
    text-align: center;
    line-height: 28px;
    background: #bccde2;
    color: #111;
    font-size: 16px;
    font-weight: bold;
}

.side-txt {
    writing-mode: vertical-rl;
    transform: rotate(180deg);
    font: 14px "DejaVu Sans", sans-serif;
    letter-spacing: 0.600px;
    color: #1a2a3a;
    align-self: center;
    padding-top: 3px;
    margin-right: 3px;
}

.tester-main {
    flex: 1;
    display: flex;
    flex-direction: column;
    min-width: 0;
}

.report-wrap {
    height: 596px;
    display: flex;
    overflow: hidden;
    background: #fff;
    flex: none;
}

.report {
    width: 1865px;
    flex: none;
}

.r {
    height: 29px;
    display: grid;
    grid-template-columns: 630px 630px 605px;
    line-height: 29px;
}

.r:nth-child(even) {
    background: #ebebeb;
}

.c {
    display: flex;
    justify-content: space-between;
    padding: 0 35px 0 6px;
    white-space: nowrap;
}

.c:nth-child(3) {
    padding-right: 7px;
}

.quality {
    grid-column: 2 / 4;
    margin: 2px 3px;
    background: #98f878;
    border: 1px solid #707070;
}

.sect {
    padding-top: 5px;
    height: 16px;
    overflow: hidden;
}

.sect b {
    font-weight: normal;
    padding-left: 63px;
}

.vscroll-r i {
    top: 25px;
    height: 144px;
}

.tester-tabs {
    height: 35px;
    border-top: 1px solid #111;
    display: flex;
    align-items: flex-start;
    flex: none;
    font-size: 16.700px;
}

.ttab {
    padding: 0 14px;
    height: 24px;
    margin-top: 4px;
    line-height: 24px;
    color: #8a8a8a;
    border-right: 1px solid #9a9a9a;
    white-space: nowrap;
}

.ttab:first-child {
    margin-left: 7px;
}

.ttab.on {
    margin-top: -1px;
    height: 30px;
    line-height: 30px;
    background: #fff;
    color: #1a1a1a;
    border: 1px solid #111;
    border-top-color: #fff;
    border-bottom-width: 2px;
}

.ttab:nth-child(3),
.ttab:nth-child(8) {
    border-right-color: transparent;
}

.timer {
    margin: 4px 15px 0 auto;
    line-height: 26px;
    white-space: nowrap;
    font-size: 17px;
}

.start {
    width: 114px;
    height: 28px;
    margin-top: 2px;
    background: #9ccc65;
    text-align: center;
    line-height: 28px;
    font-size: 17px;
}

/* status */
.status {
    height: 33px;
    display: flex;
    border-top: 1px solid #a8a8a8;
    flex: none;
}

.st {
    height: 32px;
    line-height: 33px;
    border-left: 1px solid #a8a8a8;
    padding-left: 5px;
    flex: none;
    white-space: nowrap;
}

.st-main {
    width: 961px;
    border: 0;
    padding-left: 2px;
}

.st1 {
    width: 94px;
}

.st2 {
    width: 155px;
}

.st3 {
    width: 110px;
}

.st4 {
    width: 109px;
}

.st5 {
    width: 104px;
}

.st6 {
    width: 107px;
}

.st7 {
    width: 103px;
}

.st-net {
    width: 177px;
    display: flex;
    align-items: center;
    gap: 8px;
    padding-left: 7px;
}
```
